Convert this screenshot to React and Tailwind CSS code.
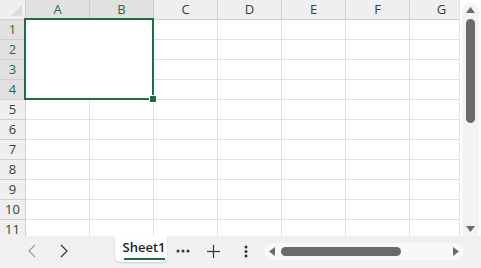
const cols = ['A', 'B', 'C', 'D', 'E', 'F', 'G'];
const rows = [1, 2, 3, 4, 5, 6, 7, 8, 9, 10, 11];
const selCols = ['A', 'B'];
const selRows = [1, 2, 3, 4];

export default function App() {
  return (
    <div
      className="w-[481px] h-[268px] flex flex-col bg-white overflow-hidden"
      style={{ fontFamily: '"Open Sans", "Noto Sans", sans-serif' }}
    >
      <div className="flex h-[236px]">
        <div className="relative w-[459px] h-[236px] overflow-hidden">
          <div className="flex h-[20px]">
            <div className="relative w-[26px] shrink-0 bg-[#efefef] border-r border-b border-[#cfcfcf]">
              <svg className="absolute right-[3px] bottom-[3px]" width="11" height="11" viewBox="0 0 11 11">
                <polygon points="11,0 11,11 0,11" fill="#dcdcdc" />
              </svg>
            </div>
            {cols.map((c) => {
              const sel = selCols.includes(c);
              return (
                <div
                  key={c}
                  className={
                    sel
                      ? 'w-[64px] shrink-0 flex items-center justify-center bg-[#e1e1e1] border-r border-b border-[#cfcfcf] text-[13px] text-[#1e6e42] leading-none'
                      : 'w-[64px] shrink-0 flex items-center justify-center bg-[#efefef] border-r border-b border-[#cfcfcf] text-[13px] text-[#3b3b3b] leading-none'
                  }
                >
                  {c}
                </div>
              );
            })}
          </div>
          {rows.map((r) => {
            const sel = selRows.includes(r);
            return (
              <div key={r} className="flex h-[20px]">
                <div
                  className={
                    sel
                      ? 'w-[26px] shrink-0 flex items-center justify-center bg-[#e1e1e1] border-r border-b border-[#cfcfcf] text-[13px] text-[#1e6e42] leading-none'
                      : 'w-[26px] shrink-0 flex items-center justify-center bg-[#efefef] border-r border-b border-[#cfcfcf] text-[13px] text-[#3b3b3b] leading-none'
                  }
                >
                  {r}
                </div>
                {cols.map((c) => (
                  <div key={c} className="w-[64px] shrink-0 border-r border-b border-[#e1e1e1]" />
                ))}
              </div>
            );
          })}
          <div className="absolute left-[24px] top-[18px] w-[130px] h-[82px] border-2 border-[#1e6e42] bg-white" />
          <div className="absolute left-[150px] top-[96px] w-[6px] h-[6px] bg-[#1e6e42] outline outline-1 outline-white" />
        </div>
        <div className="w-[22px] h-[236px] bg-white border-l border-[#e1e1e1] flex justify-center pt-[3px]">
          <div className="w-[17px] h-[235px] rounded-full bg-[#f3f3f3] flex flex-col items-center pt-[4px]">
            <svg width="9" height="6" viewBox="0 0 9 6">
              <polygon points="4.5,0 9,6 0,6" fill="#6b6b6b" />
            </svg>
            <div className="w-[9px] h-[104px] mt-[6px] rounded-full bg-[#6b6b6b]" />
            <div className="flex-1" />
            <svg className="mb-[6px]" width="9" height="6" viewBox="0 0 9 6">
              <polygon points="0,0 9,0 4.5,6" fill="#6b6b6b" />
            </svg>
          </div>
        </div>
      </div>
      <div className="flex items-start h-[32px] bg-[#f0f0f0]">
        <div className="w-[115px] h-[30px] flex items-center pl-[28px] gap-[24px] shrink-0">
          <svg width="8" height="14" viewBox="0 0 8 14">
            <polyline points="7,1 1,7 7,13" fill="none" stroke="#a0a0a0" strokeWidth="1.2" />
          </svg>
          <svg width="8" height="14" viewBox="0 0 8 14">
            <polyline points="1,1 7,7 1,13" fill="none" stroke="#333333" strokeWidth="1.2" />
          </svg>
        </div>
        <div className="w-[52px] h-[26px] shrink-0 bg-white rounded-b-[6px] shadow-[0_1px_2px_rgba(0,0,0,0.15)] flex flex-col items-center justify-end pl-[6px]">
          <span className="text-[13px] font-semibold text-[#1f1f1f] leading-none pb-[4px]">Sheet1</span>
          <div className="w-[41px] h-[2px] bg-[#1e6e42] mb-[2px]" />
        </div>
        <div className="w-[32px] h-[30px] shrink-0 flex items-center justify-center">
          <svg width="14" height="4" viewBox="0 0 14 4">
            <circle cx="2" cy="2" r="1.5" fill="#333" />
            <circle cx="7" cy="2" r="1.5" fill="#333" />
            <circle cx="12" cy="2" r="1.5" fill="#333" />
          </svg>
        </div>
        <div className="w-[28px] h-[30px] shrink-0 flex items-center justify-center">
          <svg width="13" height="13" viewBox="0 0 13 13">
            <line x1="6.5" y1="0" x2="6.5" y2="13" stroke="#333" strokeWidth="1.2" />
            <line x1="0" y1="6.5" x2="13" y2="6.5" stroke="#333" strokeWidth="1.2" />
          </svg>
        </div>
        <div className="w-[37px] h-[30px] shrink-0 flex items-center justify-center">
          <svg width="4" height="13" viewBox="0 0 4 13">
            <circle cx="2" cy="2" r="1.5" fill="#333" />
            <circle cx="2" cy="6.5" r="1.5" fill="#333" />
            <circle cx="2" cy="11" r="1.5" fill="#333" />
          </svg>
        </div>
        <div className="w-[200px] h-[17px] mt-[7px] shrink-0 rounded-full bg-[#f8f8f8] flex items-center pl-[5px] pr-[5px]">
          <svg width="6" height="9" viewBox="0 0 6 9">
            <polygon points="0,4.5 6,0 6,9" fill="#6b6b6b" />
          </svg>
          <div className="w-[120px] h-[9px] ml-[6px] rounded-full bg-[#6b6b6b]" />
          <div className="flex-1" />
          <svg width="6" height="9" viewBox="0 0 6 9">
            <polygon points="6,4.5 0,0 0,9" fill="#6b6b6b" />
          </svg>
        </div>
      </div>
    </div>
  );
}
